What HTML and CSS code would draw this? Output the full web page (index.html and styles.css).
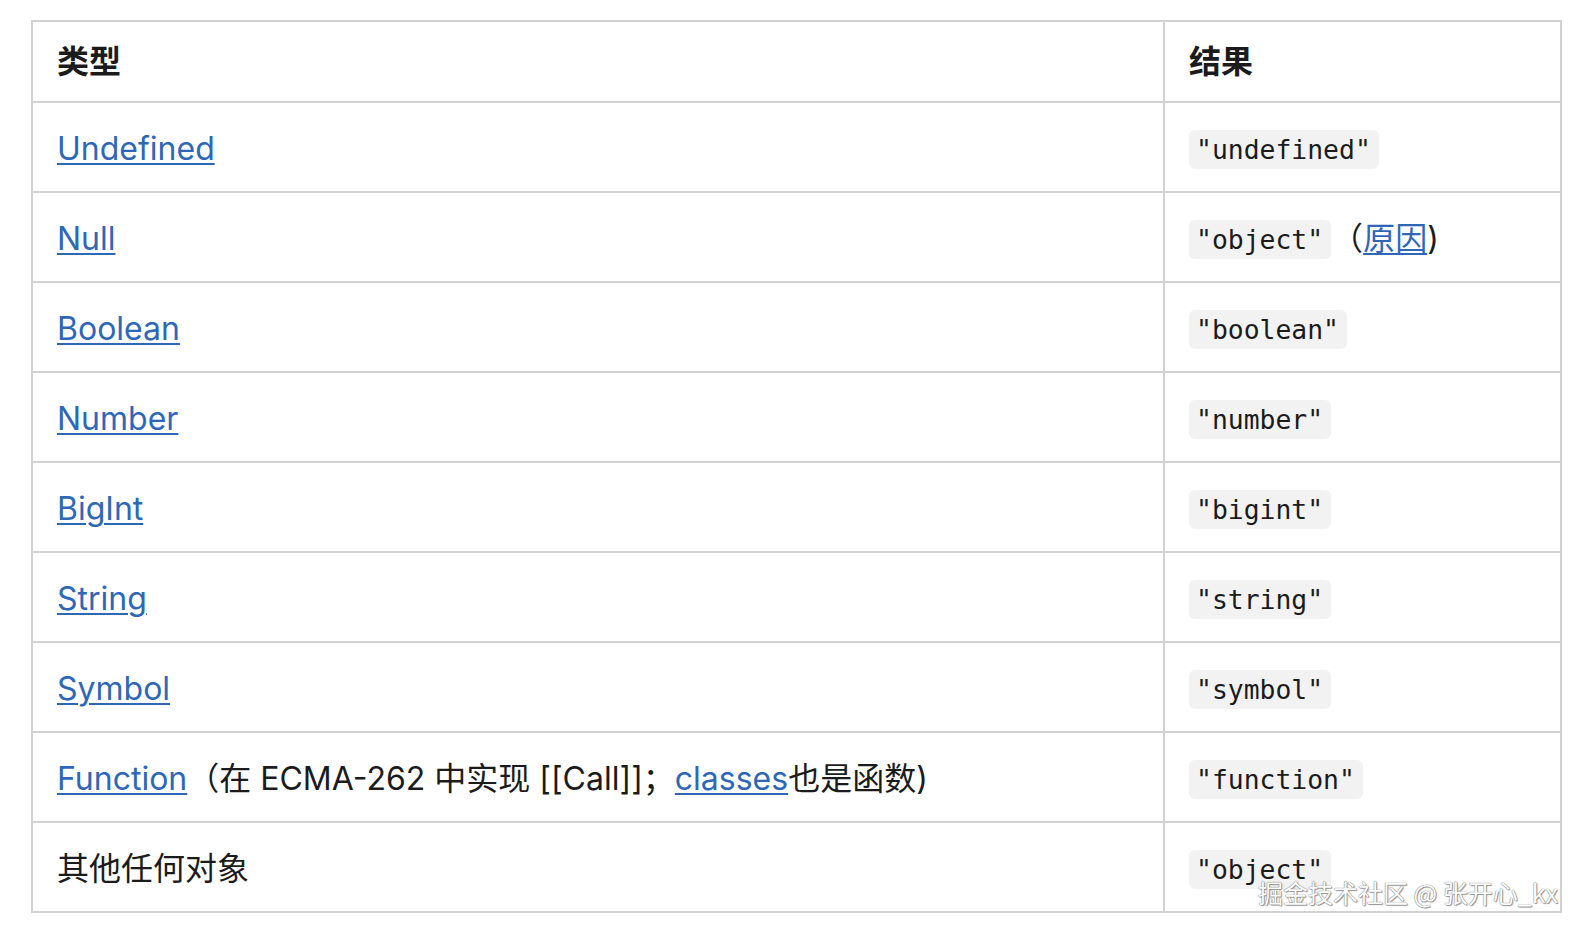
FILE: index.html
```html
<!DOCTYPE html>
<html lang="zh-CN">
<head>
<meta charset="utf-8">
<title>typeof</title>
<link rel="stylesheet" href="styles.css">
</head>
<body>
<div class="page">
  <table class="types">
    <thead>
      <tr><th class="c1">类型</th><th class="c2">结果</th></tr>
    </thead>
    <tbody>
      <tr><td class="c1"><a href="#">Undefined</a></td><td class="c2"><code>"undefined"</code></td></tr>
      <tr><td class="c1"><a href="#">Null</a></td><td class="c2"><code>"object"</code>（<a href="#">原因</a>)</td></tr>
      <tr><td class="c1"><a href="#">Boolean</a></td><td class="c2"><code>"boolean"</code></td></tr>
      <tr><td class="c1"><a href="#">Number</a></td><td class="c2"><code>"number"</code></td></tr>
      <tr><td class="c1"><a href="#">BigInt</a></td><td class="c2"><code>"bigint"</code></td></tr>
      <tr><td class="c1"><a href="#">String</a></td><td class="c2"><code>"string"</code></td></tr>
      <tr><td class="c1"><a href="#">Symbol</a></td><td class="c2"><code>"symbol"</code></td></tr>
      <tr><td class="c1"><a href="#">Function</a>（在 ECMA-262 中实现 [[Call]]；<a href="#">classes</a>也是函数)</td><td class="c2"><code>"function"</code></td></tr>
      <tr><td class="c1">其他任何对象</td><td class="c2"><code>"object"</code></td></tr>
    </tbody>
  </table>
  <div class="watermark">掘金技术社区 @ 张开心_kx</div>
</div>
</body>
</html>
```
FILE: styles.css
```css
html, body {
  margin: 0;
  padding: 0;
  background: #ffffff;
}
.page {
  position: relative;
  padding: 20px 0 0 31px;
  font-family: "Inter", "Noto Sans CJK SC", sans-serif;
  font-size: 32px;
  color: #1b1b1b;
}
.types {
  border-collapse: separate;
  border-spacing: 0;
  width: 1531px;
  table-layout: fixed;
  border-top: 2px solid #d2d2d2;
  border-left: 2px solid #d2d2d2;
}
.types th, .types td {
  border-right: 2px solid #d2d2d2;
  border-bottom: 2px solid #d2d2d2;
  text-align: left;
  vertical-align: middle;
  padding: 0 24px;
  line-height: 42px;
  white-space: nowrap;
}
.types th {
  height: 74px;
  padding-bottom: 5px;
  font-weight: 700;
  font-family: "Noto Sans CJK SC", sans-serif;
}
.types td {
  height: 85px;
  padding-top: 3px;
}
.types .c1 {
  width: 1082px;
}
.types .c2 {
  padding-left: 24px;
}
.types a {
  color: #2f67b7;
  text-decoration: underline;
  text-decoration-thickness: 2px;
  text-underline-offset: 3px;
}
.types code {
  font-family: "DejaVu Sans Mono", monospace;
  font-size: 26.4px;
  line-height: 30px;
  vertical-align: 1px;
  background: #f2f2f2;
  border-radius: 6px;
  padding: 4px 8px 4px 7px;
  color: #1b1b1b;
}
.watermark {
  position: absolute;
  left: 1258px;
  top: 877px;
  font-family: "Noto Sans CJK SC", sans-serif;
  font-size: 25px;
  line-height: 30px;
  color: #ffffff;
  white-space: nowrap;
  text-shadow: 0 0 1px #777, 0 0 1px #777, 1px 1px 1px #999;
}
```
